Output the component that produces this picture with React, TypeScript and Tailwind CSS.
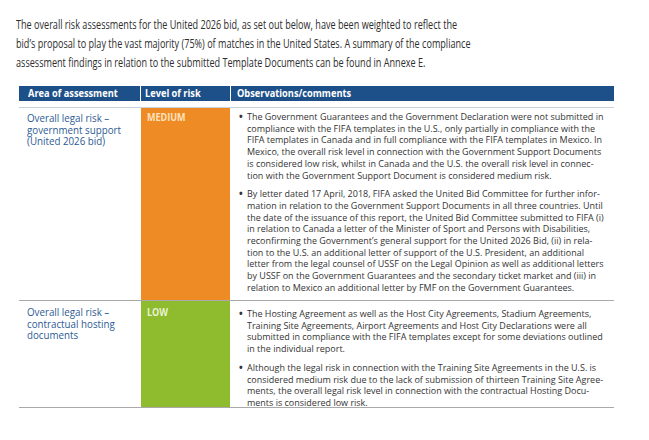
import React from "react";

const para = [
  "The overall risk assessments for the United 2026 bid, as set out below, have been weighted to reflect the",
  "bid’s proposal to play the vast majority (75%) of matches in the United States. A summary of the compliance",
  "assessment findings in relation to the submitted Template Documents can be found in Annexe E.",
];

const r1b1 = [
  "The Government Guarantees and the Government Declaration were not submitted in",
  "compliance with the FIFA templates in the U.S., only partially in compliance with the",
  "FIFA templates in Canada and in full compliance with the FIFA templates in Mexico. In",
  "Mexico, the overall risk level in connection with the Government Support Documents",
  "is considered low risk, whilst in Canada and the U.S. the overall risk level in connec-",
  "tion with the Government Support Document is considered medium risk.",
];
const r1b2 = [
  "By letter dated 17 April, 2018, FIFA asked the United Bid Committee for further infor-",
  "mation in relation to the Government Support Documents in all three countries. Until",
  "the date of the issuance of this report, the United Bid Committee submitted to FIFA (i)",
  "in relation to Canada a letter of the Minister of Sport and Persons with Disabilities,",
  "reconfirming the Government’s general support for the United 2026 Bid, (ii) in rela-",
  "tion to the U.S. an additional letter of support of the U.S. President, an additional",
  "letter from the legal counsel of USSF on the Legal Opinion as well as additional letters",
  "by USSF on the Government Guarantees and the secondary ticket market and (iii) in",
  "relation to Mexico an additional letter by FMF on the Government Guarantees.",
];
const r2b1 = [
  "The Hosting Agreement as well as the Host City Agreements, Stadium Agreements,",
  "Training Site Agreements, Airport Agreements and Host City Declarations were all",
  "submitted in compliance with the FIFA templates except for some deviations outlined",
  "in the individual report.",
];
const r2b2 = [
  "Although the legal risk in connection with the Training Site Agreements in the U.S. is",
  "considered medium risk due to the lack of submission of thirteen Training Site Agree-",
  "ments, the overall legal risk level in connection with the contractual Hosting Docu-",
  "ments is considered low risk.",
];

function Bullet({ lines }: { lines: string[] }) {
  return (
    <div className="flex">
      <span className="w-[9px] shrink-0 pl-[1px] font-bold">•</span>
      <div className="origin-top-left scale-x-[0.917] whitespace-nowrap">
        {lines.map((l, i) => (
          <div key={i}>{l}</div>
        ))}
      </div>
    </div>
  );
}

function Label({ lines }: { lines: string[] }) {
  return (
    <div className="origin-top-left scale-x-[0.93] whitespace-nowrap text-[10.5px] leading-[11.5px] text-[#2d5a94]">
      {lines.map((l, i) => (
        <div key={i}>{l}</div>
      ))}
    </div>
  );
}

export default function App() {
  return (
    <div
      className="w-[649px] h-[440px] bg-white overflow-hidden text-[#333333]"
      style={{ fontFamily: '"Open Sans", "Noto Sans", sans-serif' }}
    >
      <div className="pt-[15px] pl-[16px] text-[12.5px] leading-[19px] text-[#2e2e2e]">
        <div className="origin-top-left scale-x-[0.727] whitespace-nowrap">
          {para.map((l, i) => (
            <div key={i}>{l}</div>
          ))}
        </div>
      </div>

      <div className="ml-[19px] mt-[14px] w-[595px]">
        <div className="flex h-[15px] gap-px text-[10.5px] font-bold leading-[15px] text-white">
          <div className="w-[121px] shrink-0 bg-[#1d4f89] pl-[9px]">
            <div className="origin-top-left scale-x-[0.88] whitespace-nowrap">Area of assessment</div>
          </div>
          <div className="w-[89px] shrink-0 bg-[#1d4f89] pl-[4px]">
            <div className="origin-top-left scale-x-[0.88] whitespace-nowrap">Level of risk</div>
          </div>
          <div className="min-w-0 flex-1 bg-[#1d4f89] pl-[6px]">
            <div className="origin-top-left scale-x-[0.88] whitespace-nowrap">Observations/comments</div>
          </div>
        </div>

        <div className="mt-[6px] border-t border-[#c8d2dd]" />

        <div className="flex h-[193px] gap-px border-b border-[#a9a9a9]">
          <div className="w-[121px] shrink-0 pl-[8px] pt-[5px]">
            <Label lines={["Overall legal risk –", "government support", "(United 2026 bid)"]} />
          </div>
          <div className="w-[89px] shrink-0 bg-[#ef8b24] pl-[6px] pt-[3px] text-[10.5px] font-bold leading-[12px] text-[#fde2bf]">
            <div className="origin-top-left scale-x-[0.86] whitespace-nowrap">MEDIUM</div>
          </div>
          <div className="min-w-0 flex-1 pl-[7px] pt-[3px] text-[9.8px] leading-[11.7px]">
            <Bullet lines={r1b1} />
            <div className="h-[7px]" />
            <Bullet lines={r1b2} />
          </div>
        </div>

        <div className="flex h-[107px] gap-px border-b border-[#a9a9a9]">
          <div className="w-[121px] shrink-0 pl-[8px] pt-[6px]">
            <Label lines={["Overall legal risk –", "contractual hosting", "documents"]} />
          </div>
          <div className="w-[89px] shrink-0 bg-[#8fbb2f] pl-[6px] pt-[5px] text-[10.5px] font-bold leading-[12px] text-[#e8f2cf]">
            <div className="origin-top-left scale-x-[0.86] whitespace-nowrap">LOW</div>
          </div>
          <div className="min-w-0 flex-1 pl-[7px] pt-[7px] text-[9.8px] leading-[11.7px]">
            <Bullet lines={r2b1} />
            <div className="h-[7px]" />
            <Bullet lines={r2b2} />
          </div>
        </div>
      </div>
    </div>
  );
}
